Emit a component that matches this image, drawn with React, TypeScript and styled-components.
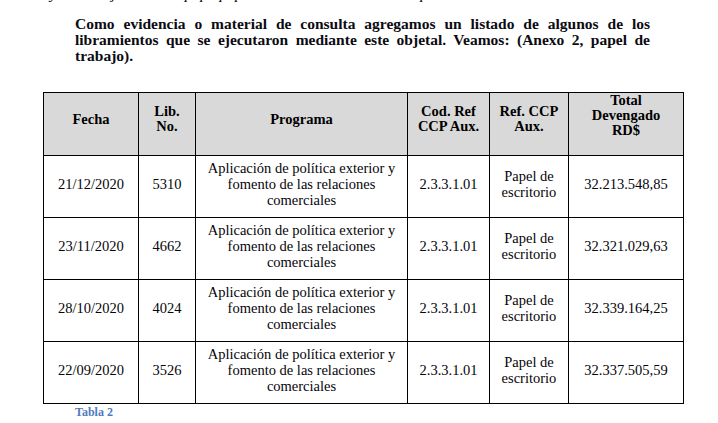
import React from "react";
import { styled, createGlobalStyle } from "styled-components";

const GlobalStyle = createGlobalStyle`
    html, body {
        margin: 0;
        padding: 0;
        background: #ffffff;
    }
    body {
        font-family: "Liberation Serif", "Times New Roman", serif;
        color: #000;
    }
`

const Page = styled.div`
    width: 718px;
    height: 423px;
    overflow: hidden;
`

const PrevLine = styled.div`
    margin: -14px 0 0 50px;
    height: 16px;
    font-size: 15.5px;
    line-height: 16px;
    white-space: nowrap;
`

const Paragraph = styled.div`
    margin: 14px 0 0 75px;
    width: 575px;
    font-size: 15.5px;
    font-weight: bold;
    line-height: 16px;
    color: #0b0b12;
`

const Line = styled.span<{ $last?: boolean }>`
    display: block;
    text-align: justify;
    text-align-last: ${({ $last }) => ($last ? "left" : "justify")};
    white-space: nowrap;
`

const Table = styled.table`
    margin: 28px 0 0 43px;
    width: 640px;
    border-collapse: collapse;
    table-layout: fixed;
`

const Row = styled.tr`
    height: 62px;
`

const HeadCell = styled.th<{ $pb?: number }>`
    background: #d9d9d9;
    border: 1.5px solid #000;
    padding: 0 4px ${({ $pb }) => $pb ?? 10}px;
    font-size: 14.5px;
    font-weight: bold;
    line-height: 15px;
    text-align: center;
    vertical-align: middle;
`

const Cell = styled.td`
    border: 1.5px solid #000;
    padding: 0 4px 6px;
    font-size: 14.5px;
    line-height: 16px;
    text-align: center;
    vertical-align: middle;
    white-space: nowrap;
    color: #05050a;
`

const Caption = styled.div`
    margin: 2px 0 0 75px;
    font-size: 12px;
    line-height: 12px;
    font-weight: bold;
    color: #4f7bbf;
`

type Entry = {
    fecha: string;
    lib: string;
    total: string;
}

const entries: Entry[] = [
    { fecha: "21/12/2020", lib: "5310", total: "32.213.548,85" },
    { fecha: "23/11/2020", lib: "4662", total: "32.321.029,63" },
    { fecha: "28/10/2020", lib: "4024", total: "32.339.164,25" },
    { fecha: "22/09/2020", lib: "3526", total: "32.337.505,59" },
]

const App: React.FC = () => {
    return (
        <Page>
            <GlobalStyle />
            <PrevLine>
                <i>y se han ejecutado la papa papelería de la institución en el periodo.</i>
            </PrevLine>
            <Paragraph>
                <Line>Como evidencia o material de consulta agregamos un listado de algunos de los</Line>
                <Line>libramientos que se ejecutaron mediante este objetal. Veamos: (Anexo 2, papel de</Line>
                <Line $last>trabajo).</Line>
            </Paragraph>
            <Table>
                <colgroup>
                    <col style={{ width: 95 }} />
                    <col style={{ width: 57 }} />
                    <col style={{ width: 212 }} />
                    <col style={{ width: 82 }} />
                    <col style={{ width: 79 }} />
                    <col style={{ width: 115 }} />
                </colgroup>
                <thead>
                    <Row>
                        <HeadCell>Fecha</HeadCell>
                        <HeadCell>Lib.<br />No.</HeadCell>
                        <HeadCell>Programa</HeadCell>
                        <HeadCell>Cod. Ref<br />CCP Aux.</HeadCell>
                        <HeadCell>Ref. CCP<br />Aux.</HeadCell>
                        <HeadCell $pb={17}>Total<br />Devengado<br />RD$</HeadCell>
                    </Row>
                </thead>
                <tbody>
                    {entries.map((e) => (
                        <Row key={e.lib}>
                            <Cell>{e.fecha}</Cell>
                            <Cell>{e.lib}</Cell>
                            <Cell>
                                Aplicación de política exterior y<br />
                                fomento de las relaciones<br />
                                comerciales
                            </Cell>
                            <Cell>2.3.3.1.01</Cell>
                            <Cell>Papel de<br />escritorio</Cell>
                            <Cell>{e.total}</Cell>
                        </Row>
                    ))}
                </tbody>
            </Table>
            <Caption>Tabla 2</Caption>
        </Page>
    )
}

export default App;
